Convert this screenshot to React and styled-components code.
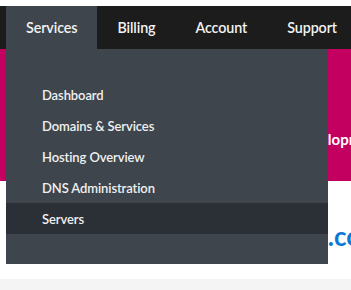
import React from "react";
import styled, { createGlobalStyle } from "styled-components";

const GlobalStyle = createGlobalStyle`
  body {
    margin: 0;
    background: #ffffff;
    font-family: Lato, "Open Sans", sans-serif;
  }
`;

const menuItems = [
  "Dashboard",
  "Domains & Services",
  "Hosting Overview",
  "DNS Administration",
  "Servers",
];

export default function App() {
  return (
    <>
      <GlobalStyle />
      <Page>
        <NavBar>
          <NavItem active>
            Services
            <Dropdown>
              {menuItems.map((item) => (
                <DropItem key={item} selected={item === "Servers"}>
                  {item}
                </DropItem>
              ))}
            </Dropdown>
          </NavItem>
          <NavItem>Billing</NavItem>
          <NavItem>Account</NavItem>
          <NavItem>Support</NavItem>
        </NavBar>
        <Hero>
          <HeroText>Developro</HeroText>
        </Hero>
        <Section>
          <DomainText>example.com</DomainText>
        </Section>
        <Footer />
      </Page>
    </>
  );
}

const Page = styled.div`
  padding-top: 6px;
  width: 351px;
  height: 284px;
  overflow: hidden;
`;

const NavBar = styled.nav`
  display: flex;
  height: 43px;
  padding-left: 6px;
  background: #1c1c1c;
  position: relative;
  z-index: 2;
`;

const NavItem = styled.div`
  position: relative;
  display: flex;
  align-items: center;
  padding: 0 20px;
  font-size: 14.3px;
  font-weight: 600;
  letter-spacing: -0.1px;
  color: #f2f2f2;
  white-space: nowrap;
  background: ${(p) => (p.active ? "#3e454c" : "transparent")};
`;

const Dropdown = styled.div`
  position: absolute;
  top: 43px;
  left: 0;
  width: 322px;
  padding: 30px 0;
  background: #3e454c;
  display: flex;
  flex-direction: column;
`;

const DropItem = styled.div`
  height: 31px;
  display: flex;
  align-items: center;
  padding-left: 36px;
  font-size: 13px;
  font-weight: 600;
  letter-spacing: -0.1px;
  color: #f0f0f0;
  background: ${(p) => (p.selected ? "#2b2f36" : "transparent")};
`;

const Hero = styled.div`
  height: 132px;
  background: #c3005f;
  padding: 81px 0 0 293px;
  box-sizing: border-box;
  overflow: hidden;
`;

const HeroText = styled.div`
  font-size: 15px;
  line-height: 18px;
  font-weight: 700;
  color: #ffffff;
  white-space: nowrap;
`;

const Section = styled.div`
  height: 98px;
  display: flex;
  align-items: center;
  justify-content: flex-end;
  padding-top: 12px;
  box-sizing: border-box;
`;

const DomainText = styled.div`
  font-size: 26px;
  font-weight: 700;
  color: #0a78d6;
  white-space: nowrap;
  margin-right: -32px;
`;

const Footer = styled.div`
  height: 11px;
  background: #f4f4f4;
`;
